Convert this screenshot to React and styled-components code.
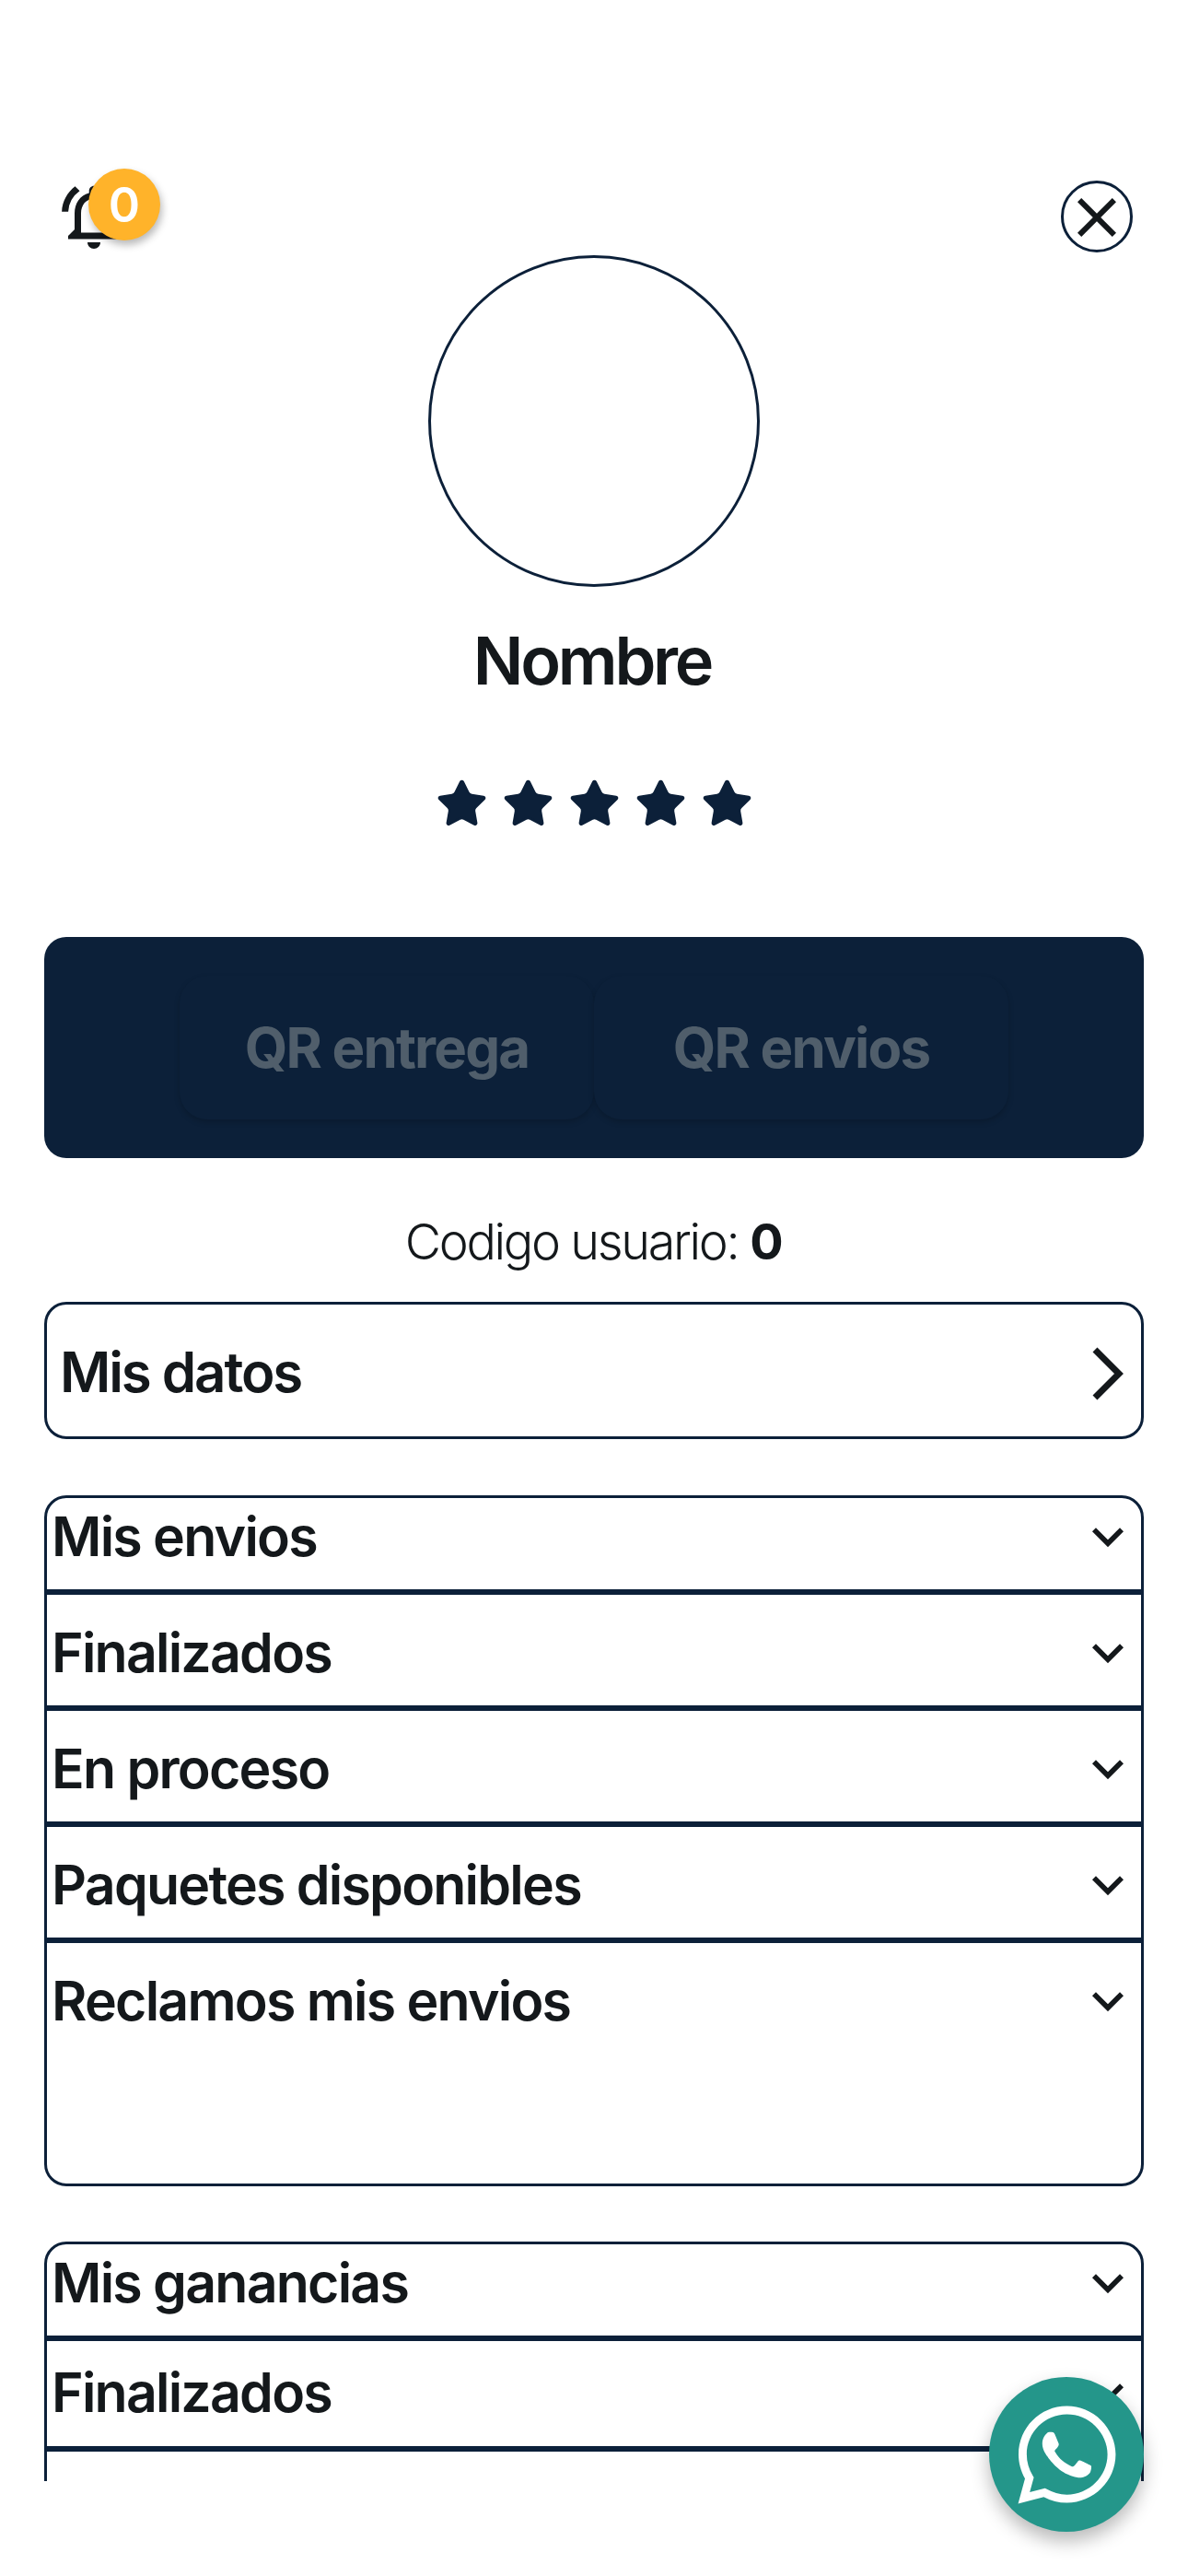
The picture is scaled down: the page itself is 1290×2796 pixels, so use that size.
import React from "react";
import styled, { createGlobalStyle } from "styled-components";
import { Star } from "lucide-react";
import { FaWhatsapp } from "react-icons/fa";
import {
  MdClose,
  MdKeyboardArrowDown,
  MdOutlineNotificationsActive,
} from "react-icons/md";

const navy = "#0c2039";
const ink = "#14181b";

const GlobalStyle = createGlobalStyle`
  body {
    margin: 0;
    background: #fff;
    font-family: Inter, "Noto Sans", sans-serif;
    color: ${ink};
  }
  * { box-sizing: border-box; }
`;

const Page = styled.div`
  position: relative;
  width: 1290px;
  height: 2796px;
  overflow: hidden;
  background: #fff;
`;

const Scroller = styled.div`
  height: 2693px;
  overflow: hidden;
  display: flex;
  flex-direction: column;

  > * {
    flex-shrink: 0;
  }
`;

const Header = styled.div`
  display: flex;
  justify-content: space-between;
  align-items: center;
  height: 84px;
  margin-top: 193px;
  padding: 0 60px;
`;

const BellWrap = styled.div`
  position: relative;
  width: 84px;
  height: 84px;
  color: ${ink};
`;

const Badge = styled.div`
  position: absolute;
  left: 36px;
  top: -10px;
  width: 78px;
  height: 78px;
  border-radius: 50%;
  background: #ffb32a;
  box-shadow: 2px 5px 9px rgba(0, 0, 0, 0.28);
  color: #fff;
  font-size: 52px;
  font-weight: 600;
  display: flex;
  align-items: center;
  justify-content: center;
`;

const CloseButton = styled.div`
  width: 78px;
  height: 78px;
  padding-top: 2px;
  border: 3px solid ${navy};
  border-radius: 50%;
  color: ${ink};
  display: flex;
  align-items: center;
  justify-content: center;
`;

const Profile = styled.div`
  display: flex;
  flex-direction: column;
  align-items: center;
`;

const Avatar = styled.div`
  width: 360px;
  height: 360px;
  border: 3px solid ${navy};
  border-radius: 50%;
`;

const Name = styled.div`
  margin-top: 36px;
  padding-right: 4px;
  font-size: 72px;
  font-weight: 600;
  letter-spacing: -0.045em;
`;

const Stars = styled.div`
  display: flex;
  gap: 13px;
  margin-top: 83px;
  color: ${navy};
`;

const QrPanel = styled.div`
  display: flex;
  align-items: center;
  justify-content: center;
  height: 240px;
  margin: 115px 48px 0;
  border-radius: 24px;
  background: ${navy};
`;

const QrButton = styled.div`
  width: 450px;
  height: 156px;
  border-radius: 30px;
  background: ${navy};
  box-shadow: 0 3px 6px rgba(0, 0, 0, 0.18);
  color: #505e6b;
  font-size: 60px;
  font-weight: 700;
  letter-spacing: -0.03em;
  display: flex;
  align-items: center;
  justify-content: center;
`;

const UserCode = styled.div`
  margin-top: 58px;
  padding-right: 2px;
  text-align: center;
  font-size: 54px;
  font-weight: 300;
  letter-spacing: -0.044em;

  b {
    font-weight: 700;
  }
`;

const DataLink = styled.div`
  display: flex;
  align-items: center;
  justify-content: space-between;
  height: 149px;
  margin: 33px 48px 0;
  padding: 2px 16px 0 14px;
  border: 3px solid ${navy};
  border-radius: 24px;
  font-size: 60px;
  font-weight: 600;
  letter-spacing: -0.035em;
`;

const ChevronIcon = styled.svg`
  margin-top: 5px;
`;

const Group = styled.div`
  margin: ${(p) => p.$top}px 48px 0;
  border: 3px solid ${navy};
  border-radius: 24px;
`;

const Row = styled.div`
  display: flex;
  align-items: flex-start;
  justify-content: space-between;
  height: ${(p) => p.$height}px;
  padding: ${(p) => p.$pad}px 2px 0 5px;
  border-bottom: ${(p) => (p.$last ? "none" : `6px solid ${navy}`)};
  font-size: 59px;
  font-weight: 600;
  letter-spacing: -0.03em;
  line-height: 70px;

  svg {
    margin-top: 1px;
  }
`;

const WhatsappButton = styled.div`
  position: absolute;
  left: 1074px;
  top: 2580px;
  width: 168px;
  height: 168px;
  border-radius: 50%;
  background: #24968a;
  box-shadow: 0 10px 20px rgba(0, 0, 0, 0.28);
  color: #fff;
  display: flex;
  align-items: center;
  justify-content: center;
`;

const shipments = [
  { label: "Mis envios", height: 105, pad: 7 },
  { label: "Finalizados", height: 126, pad: 28 },
  { label: "En proceso", height: 126, pad: 28 },
  { label: "Paquetes disponibles", height: 126, pad: 28 },
  { label: "Reclamos mis envios", height: 261, pad: 28, last: true },
];

const earnings = [
  { label: "Mis ganancias", height: 105, pad: 7 },
  { label: "Finalizados", height: 120, pad: 21 },
];

const App = () => {
  return (
    <Page>
      <GlobalStyle />
      <Scroller>
        <Header>
          <BellWrap>
            <MdOutlineNotificationsActive size={84} />
            <Badge>0</Badge>
          </BellWrap>
          <CloseButton>
            <MdClose size={72} />
          </CloseButton>
        </Header>
        <Profile>
          <Avatar />
          <Name>Nombre</Name>
          <Stars>
            {[0, 1, 2, 3, 4].map((i) => (
              <Star key={i} size={59} fill={navy} strokeWidth={1} />
            ))}
          </Stars>
        </Profile>
        <QrPanel>
          <QrButton>QR entrega</QrButton>
          <QrButton>QR envios</QrButton>
        </QrPanel>
        <UserCode>
          Codigo usuario: <b>0</b>
        </UserCode>
        <DataLink>
          Mis datos
          <ChevronIcon width="40" height="64" viewBox="0 0 40 64">
            <path d="M6 6 L32 32 L6 58" fill="none" stroke={ink} strokeWidth="7" />
          </ChevronIcon>
        </DataLink>
        <Group $top={61}>
          {shipments.map((r) => (
            <Row key={r.label} $height={r.height} $pad={r.pad} $last={r.last}>
              {r.label}
              <MdKeyboardArrowDown size={68} />
            </Row>
          ))}
        </Group>
        <Group $top={60}>
          {earnings.map((r) => (
            <Row key={r.label} $height={r.height} $pad={r.pad}>
              {r.label}
              <MdKeyboardArrowDown size={68} />
            </Row>
          ))}
          <Row $height={114} $pad={21} $last />
        </Group>
      </Scroller>
      <WhatsappButton>
        <FaWhatsapp size={121} />
      </WhatsappButton>
    </Page>
  );
};

export default App;
